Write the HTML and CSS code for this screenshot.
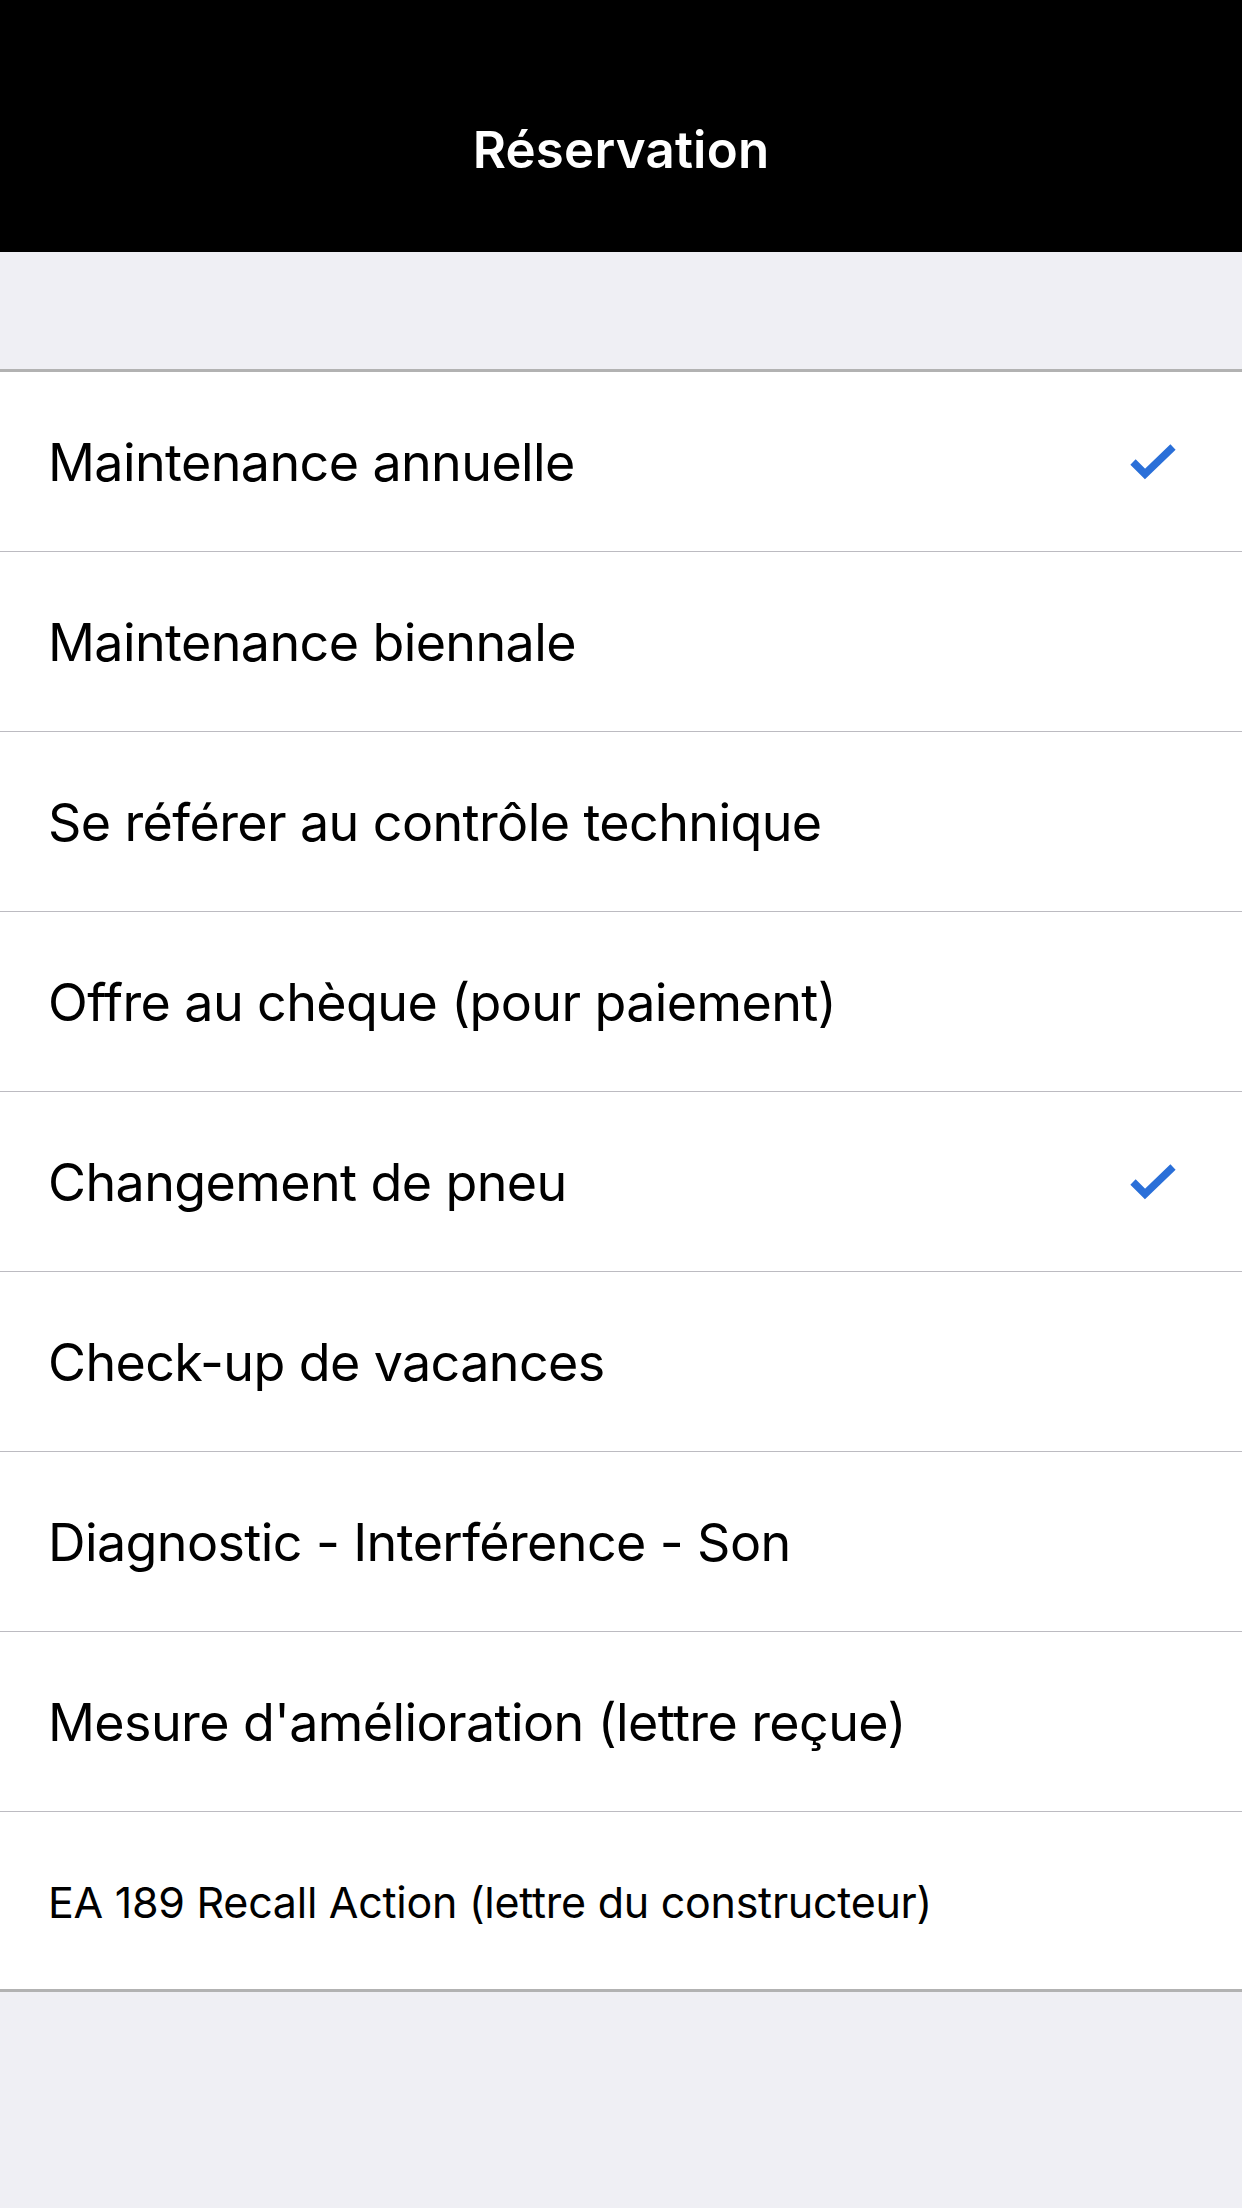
FILE: index.html
```html
<!DOCTYPE html>
<html lang="fr">
<head>
<meta charset="utf-8">
<title>Réservation</title>
<link rel="stylesheet" href="styles.css">
</head>
<body>
<header class="navbar">
  <h1 class="navbar-title">Réservation</h1>
</header>
<div class="spacer"></div>
<ul class="list">
  <li class="row"><span class="label">Maintenance annuelle</span><svg class="check" viewBox="0 0 50 40" width="50" height="40"><path d="M5 19 L17 31 L45 4" fill="none" stroke="#2a6fd8" stroke-width="7.5" stroke-linejoin="miter"/></svg></li>
  <li class="row"><span class="label">Maintenance biennale</span></li>
  <li class="row"><span class="label">Se référer au contrôle technique</span></li>
  <li class="row"><span class="label">Offre au chèque (pour paiement)</span></li>
  <li class="row"><span class="label">Changement de pneu</span><svg class="check" viewBox="0 0 50 40" width="50" height="40"><path d="M5 19 L17 31 L45 4" fill="none" stroke="#2a6fd8" stroke-width="7.5" stroke-linejoin="miter"/></svg></li>
  <li class="row"><span class="label">Check-up de vacances</span></li>
  <li class="row"><span class="label">Diagnostic - Interférence - Son</span></li>
  <li class="row"><span class="label">Mesure d'amélioration (lettre reçue)</span></li>
  <li class="row row-last"><span class="label label-small">EA 189 Recall Action (lettre du constructeur)</span></li>
</ul>
</body>
</html>
```

FILE: styles.css
```css
html, body {
  margin: 0;
  padding: 0;
}
body {
  background: #efeff4;
  min-height: 2208px;
  font-family: "Inter", "Liberation Sans", sans-serif;
  color: #000;
}
.navbar {
  height: 252px;
  box-sizing: border-box;
  padding-top: 47px;
  background: #000;
  display: flex;
  align-items: center;
  justify-content: center;
}
.navbar-title {
  margin: 0;
  color: #fff;
  font-size: 51px;
  font-weight: 600;
  letter-spacing: 0.2px;
}
.spacer {
  height: 117px;
}
.list {
  list-style: none;
  margin: 0;
  padding: 0;
  background: #fff;
  border-top: 3px solid #b2b2b2;
  border-bottom: 3px solid #b2b2b2;
}
.row {
  height: 180px;
  box-sizing: border-box;
  border-bottom: 1px solid #bcbbc1;
  padding: 2px 64px 0 48px;
  display: flex;
  align-items: center;
  justify-content: space-between;
}
.row-last {
  height: 177px;
  border-bottom: none;
}
.label {
  font-size: 52px;
  font-weight: 400;
  letter-spacing: -0.6px;
}
.label-small {
  font-size: 43px;
  letter-spacing: -0.27px;
}
.check {
  display: block;
  flex: none;
}
```
